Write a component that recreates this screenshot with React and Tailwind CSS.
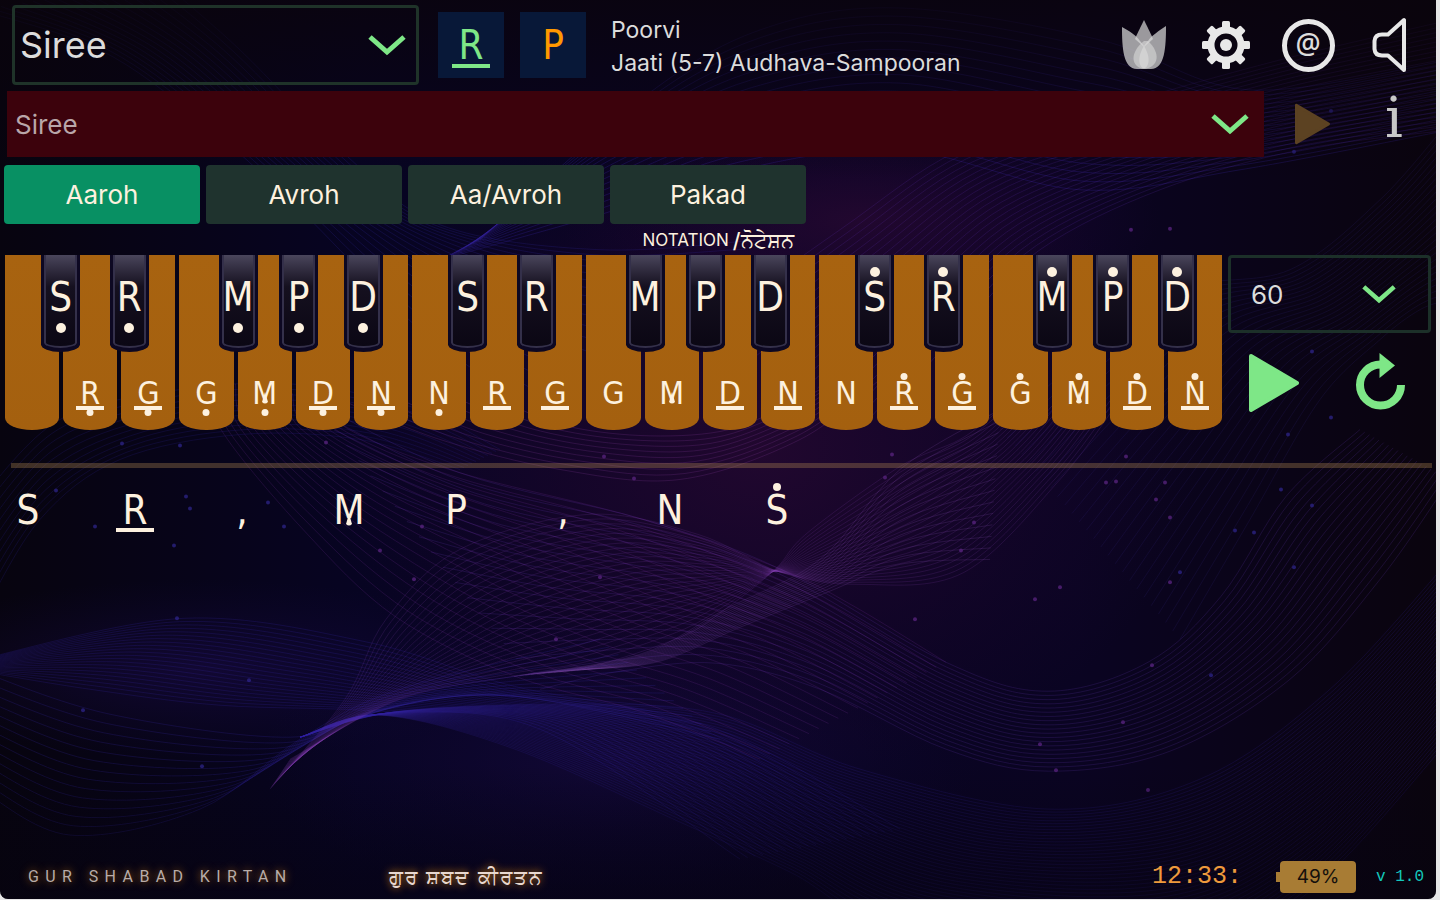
import { useState } from 'react';
import clsx from 'clsx';

const TABS = ['Aaroh', 'Avroh', 'Aa/Avroh', 'Pakad'];

// mark: komal = bar under the note, tivra = spike inside it
// octave: low = dot below, high = dot above
const OCTAVES = [
  {
    octave: 'low',
    white: [
      { note: '' },
      { note: 'R', mark: 'komal' },
      { note: 'G', mark: 'komal' },
      { note: 'G' },
      { note: 'M', mark: 'tivra' },
      { note: 'D', mark: 'komal' },
      { note: 'N', mark: 'komal' }
    ]
  },
  {
    octave: 'mid',
    white: [
      { note: 'N', octave: 'low' },
      { note: 'R', mark: 'komal' },
      { note: 'G', mark: 'komal' },
      { note: 'G' },
      { note: 'M', mark: 'tivra' },
      { note: 'D', mark: 'komal' },
      { note: 'N', mark: 'komal' }
    ]
  },
  {
    octave: 'high',
    white: [
      { note: 'N', octave: 'mid' },
      { note: 'R', mark: 'komal' },
      { note: 'G', mark: 'komal' },
      { note: 'G' },
      { note: 'M', mark: 'tivra' },
      { note: 'D', mark: 'komal' },
      { note: 'N', mark: 'komal' }
    ]
  }
];

const BLACK_KEYS = [
  { note: 'S', place: 'left-[9%]' },
  { note: 'R', place: 'left-[26%]' },
  { note: 'M', place: 'left-[53%]' },
  { note: 'P', place: 'left-[68%]' },
  { note: 'D', place: 'left-[84%]' }
];

const SEQUENCE = [
  { note: 'S' },
  { note: 'R', mark: 'komal' },
  { note: ',' },
  { note: 'M', mark: 'tivra' },
  { note: 'P' },
  { note: ',' },
  { note: 'N' },
  { note: 'S', octave: 'high' }
];

// Each ribbon is a set of smooth lines blended from one curve to another
const RIBBONS = [
  { from: [[-20, 660], [184, 619], [368, 643], [514, 687], [717, 730], [900, 830]], to: [[-20, 672], [90, 690], [220, 706], [380, 712], [540, 730], [740, 860]], n: 22, color: '#3a28b8', opacity: 0.2 },
  { from: [[-20, 672], [110, 715], [290, 738], [380, 710], [514, 697], [720, 740]], to: [[-20, 790], [70, 836], [200, 810], [300, 740], [400, 690], [600, 640]], n: 14, color: '#3425a0', opacity: 0.24 },
  { from: [[210, 380], [221, 430], [303, 530], [395, 617], [515, 677], [643, 713], [760, 760]], to: [[330, 400], [349, 430], [459, 473], [643, 520], [781, 570], [854, 607], [946, 663]], n: 20, color: '#8a35b0', opacity: 0.18 },
  { from: [[310, 400], [459, 473], [643, 520], [781, 570], [946, 663], [1048, 692], [1148, 663], [1221, 597], [1286, 497], [1360, 430]], to: [[540, 690], [620, 672], [717, 664], [820, 690], [946, 750], [1048, 772], [1170, 752], [1290, 680], [1380, 580], [1450, 480]], n: 20, color: '#6638b8', opacity: 0.2 },
  { from: [[300, 738], [400, 712], [580, 705], [720, 715], [860, 770], [1048, 810], [1200, 780], [1330, 690], [1450, 560]], to: [[300, 738], [380, 716], [515, 750], [680, 823], [790, 873], [900, 930], [1150, 960], [1300, 900], [1450, 740]], n: 44, color: '#3325a0', opacity: 0.2 },
  { from: [[270, 790], [345, 700], [386, 620], [460, 550], [588, 515], [698, 535], [781, 573], [860, 585], [964, 573], [1060, 480], [1120, 400]], to: [[290, 760], [400, 700], [514, 677], [588, 668], [680, 638], [725, 610], [775, 570], [808, 533], [900, 467], [960, 440], [1000, 410]], n: 26, color: '#8440b0', opacity: 0.18 },
  { from: [[480, 240], [640, 100], [760, 30], [900, 8], [1100, 40], [1250, 90], [1450, 60]], to: [[440, 260], [600, 215], [740, 170], [900, 150], [1080, 190], [1240, 170], [1450, 130]], n: 18, color: '#3c28b0', opacity: 0.26 },
  { from: [[700, 330], [840, 230], [960, 150], [1100, 110], [1280, 60], [1450, 20]], to: [[880, 420], [960, 330], [1040, 250], [1160, 190], [1300, 150], [1450, 130]], n: 24, color: '#5a2ca8', opacity: 0.22 },
  { from: [[1000, 430], [1080, 360], [1180, 290], [1290, 270], [1380, 200], [1450, 120]], to: [[1180, 640], [1250, 520], [1320, 400], [1380, 340], [1420, 310], [1450, 300]], n: 26, color: '#3c2c94', opacity: 0.16 },
  { from: [[-20, 10], [100, 50], [200, 120], [300, 210], [420, 330], [520, 400]], to: [[160, -20], [240, 50], [340, 150], [440, 225], [600, 250], [760, 240]], n: 18, color: '#2c2490', opacity: 0.26 },
  { from: [[340, 400], [440, 440], [560, 470], [680, 480], [800, 440], [880, 380]], to: [[500, 400], [560, 425], [640, 436], [720, 432], [780, 410], [820, 390]], n: 9, color: '#8a3aa0', opacity: 0.22 },
  { from: [[-20, 620], [40, 520], [120, 460], [240, 435], [360, 440], [460, 470]], to: [[-20, 500], [60, 420], [180, 390], [300, 385], [420, 410], [500, 450]], n: 11, color: '#30249c', opacity: 0.2 },
  { from: [[514, 677], [640, 655], [725, 610], [820, 560], [900, 470], [1000, 410]], to: [[588, 670], [660, 662], [740, 628], [827, 593], [900, 565], [990, 560]], n: 14, color: '#8a50b8', opacity: 0.2 }
];

const SPARKS = [
  [122, 444], [180, 446], [326, 443], [56, 491], [186, 497], [190, 509], [268, 503], [95, 527], [284, 527],
  [174, 546], [422, 527], [380, 551], [604, 457], [634, 479], [414, 580], [556, 640], [600, 578], [885, 478],
  [892, 455], [974, 523], [961, 551], [1035, 600], [1106, 483], [1116, 482], [1126, 457], [1156, 500],
  [1165, 483], [1170, 518], [1235, 531], [1254, 533], [1281, 490], [1312, 506], [1180, 573], [1170, 583],
  [1294, 568], [1152, 666], [1211, 676], [1123, 723], [1056, 771], [1040, 745], [1148, 791], [177, 619],
  [202, 767], [249, 681], [83, 711], [1331, 111], [1207, 97], [1294, 152], [1131, 230], [1170, 229], [1312, 352],
  [1331, 418], [1288, 435], [915, 620], [1060, 588]
];

const blend = (a, b, t) => a + (b - a) * t;

const ribbonLine = (ribbon, i) => {
  const t = i / (ribbon.n - 1);
  const last = ribbon.from.length - 1;
  const end = ribbon.to.length - 1;
  const pts = ribbon.from.map(([x, y], k) => {
    const other = ribbon.to[Math.round((k / last) * end)];
    return [blend(x, other[0], t), blend(y, other[1], t)];
  });
  let d = `M${pts[0].join(' ')}`;
  for (let k = 0; k < last; k++) {
    const p0 = pts[k - 1] || pts[k];
    const p1 = pts[k];
    const p2 = pts[k + 1];
    const p3 = pts[k + 2] || p2;
    d += ` C${p1[0] + (p2[0] - p0[0]) / 6} ${p1[1] + (p2[1] - p0[1]) / 6}`;
    d += ` ${p2[0] - (p3[0] - p1[0]) / 6} ${p2[1] - (p3[1] - p1[1]) / 6} ${p2[0]} ${p2[1]}`;
  }
  return d;
};

const Backdrop = () => (
  <svg className="absolute inset-0 -z-10 size-full" viewBox="0 0 1436 900" preserveAspectRatio="none" aria-hidden="true">
    <defs>
      <linearGradient id="base" x1="0" x2="1">
        <stop offset="0" stopColor="#07040f" />
        <stop offset="0.25" stopColor="#070422" />
        <stop offset="0.75" stopColor="#0a0422" />
        <stop offset="1" stopColor="#0a040e" />
      </linearGradient>
      <radialGradient id="plum">
        <stop offset="0" stopColor="#240830" stopOpacity="0.9" />
        <stop offset="1" stopColor="#1c0530" stopOpacity="0" />
      </radialGradient>
      <radialGradient id="indigo">
        <stop offset="0" stopColor="#190b44" stopOpacity="0.6" />
        <stop offset="1" stopColor="#120838" stopOpacity="0" />
      </radialGradient>
      <linearGradient id="shade" x1="0" x2="0" y1="0" y2="1">
        <stop offset="0" stopColor="#0a040c" stopOpacity="0.8" />
        <stop offset="0.2" stopColor="#0a040c" stopOpacity="0" />
        <stop offset="0.85" stopColor="#06030f" stopOpacity="0" />
        <stop offset="1" stopColor="#06030f" stopOpacity="0.5" />
      </linearGradient>
    </defs>
    <rect width="1436" height="900" fill="url(#base)" />
    <ellipse cx="760" cy="450" rx="440" ry="330" fill="url(#plum)" />
    <ellipse cx="860" cy="220" rx="300" ry="110" fill="url(#plum)" />
    <ellipse cx="200" cy="670" rx="330" ry="90" fill="url(#indigo)" />
    <ellipse cx="620" cy="760" rx="360" ry="150" fill="url(#indigo)" />
    {RIBBONS.map((ribbon, r) => (
      <g key={r} fill="none" stroke={ribbon.color} strokeOpacity={ribbon.opacity}>
        {Array.from({ length: ribbon.n }, (_, i) => (
          <path key={i} d={ribbonLine(ribbon, i)} />
        ))}
      </g>
    ))}
    {SPARKS.map(([x, y], i) => (
      <circle key={i} cx={x} cy={y} r="2" fill={x > 320 && x < 1180 ? '#5a2480' : '#2e2488'} opacity="0.75" />
    ))}
    <rect width="1436" height="900" fill="url(#shade)" />
  </svg>
);

const Chevron = ({ className }) => (
  <svg className={clsx('pointer-events-none absolute top-1/2 -translate-y-1/2', className)} viewBox="0 0 38 22" fill="none" stroke="#7ee787" strokeWidth="5" aria-hidden="true">
    <path d="M2 3 L19 18 L36 3" />
  </svg>
);

const PlayIcon = ({ className }) => (
  <svg className={className} viewBox="0 0 52 60" fill="currentColor" stroke="currentColor" strokeWidth="4" strokeLinejoin="round" aria-hidden="true">
    <path d="M3 3 L49 30 L3 57 Z" />
  </svg>
);

const LotusIcon = () => (
  <svg className="h-[52px] w-[46px]" viewBox="0 0 46 52" fill="#d8d8d8" aria-hidden="true">
    <path opacity="0.72" d="M1 8 C8 12 15 16 19 22 C30 34 30 48 22 50 L16 50 C2 50 1 28 1 8 Z" />
    <path opacity="0.72" d="M45 7 C38 12 31 16 27 22 C16 34 16 48 24 50 L30 50 C44 50 45 28 45 7 Z" />
    <path opacity="0.7" d="M23 1 C19 9 16 15 14 20 L23 28 L32 20 C30 15 27 9 23 1 Z" />
    <path opacity="0.6" d="M23 22 C8 34 10 48 23 50 C38 48 40 34 27 22 Z" />
  </svg>
);

const GearIcon = () => (
  <svg className="size-[50px]" viewBox="-25 -25 50 50" fill="#e8e8e8" aria-hidden="true">
    <circle r="15" fill="none" stroke="#e8e8e8" strokeWidth="7" />
    {[0, 45, 90, 135, 180, 225, 270, 315].map((angle) => (
      <rect key={angle} x="-4" y="-24" width="8" height="9" rx="1.5" transform={`rotate(${angle})`} />
    ))}
    <circle r="6" />
  </svg>
);

const SpeakerIcon = () => (
  <svg className="h-[56px] w-[36px]" viewBox="0 0 36 56" fill="none" stroke="#e8e8e8" strokeWidth="4" strokeLinejoin="round" aria-hidden="true">
    <path d="M32 3 V53 L16 38.5 H10 Q3 38.5 2.5 32 V24 Q3 17.5 10 17.5 H16 Z" />
  </svg>
);

const ReloadIcon = () => (
  <svg className="h-[60px] w-[52px]" viewBox="0 0 52 60" aria-hidden="true">
    <path d="M46 32 A20.5 20.5 0 1 1 25.5 11.5" fill="none" stroke="#7ee787" strokeWidth="8" />
    <path d="M24.5 0 L40 12.5 L24.5 25 Z" fill="#7ee787" />
  </svg>
);

const SIZES = {
  small: { box: 'h-[27px] w-7 text-[32px]', dot: 'size-[7px]', above: '-top-1.5', below: '-bottom-2.5', bar: 'h-1 w-7 -bottom-1' },
  large: { box: 'h-10 w-7 text-[40px]', dot: 'size-2.5', above: '-top-2.5', below: '-bottom-4', bar: 'h-1 w-10 bottom-0' },
  line: { box: 'h-[37px] w-[38px] text-[40px]', dot: 'size-2', above: '-top-2', below: '-bottom-3', bar: 'h-1 w-[38px] -bottom-1' }
};

const Note = ({ note, mark, octave, size }) => {
  const s = SIZES[size];
  return (
    <span className={clsx("relative flex items-center justify-center font-['Liberation_Sans_Narrow','DejaVu_Sans_Condensed',sans-serif] leading-none", s.box)}>
      {note}
      {mark === 'tivra' && (
        <svg className="absolute bottom-0.5 left-1/2 h-3 w-1.5 -translate-x-1/2" viewBox="0 0 6 12" fill="currentColor" aria-hidden="true">
          <path d="M3 0 L6 10 Q3 13 0 10 Z" />
        </svg>
      )}
      {mark === 'komal' && <span className={clsx('absolute left-1/2 -translate-x-1/2 bg-current', s.bar)} />}
      {octave === 'low' && <span className={clsx('absolute left-1/2 -translate-x-1/2 rounded-full bg-current', s.dot, s.below)} />}
      {octave === 'high' && <span className={clsx('absolute left-1/2 -translate-x-1/2 rounded-full bg-current', s.dot, s.above)} />}
    </span>
  );
};

const WhiteKey = ({ note, mark, octave }) => (
  <button
    type="button"
    aria-label={note ? `${octave} ${note}` : 'Lowest key'}
    className="flex flex-1 items-end justify-center rounded-[0_0_50%_50%/0_0_7%_7%] bg-linear-to-b from-[#a86310] to-[#a4600f] pb-[24px]"
  >
    {note && <Note note={note} mark={mark} octave={octave} size="small" />}
  </button>
);

const BlackKey = ({ note, octave, place }) => (
  <button
    type="button"
    aria-label={`${octave} ${note}`}
    className={clsx('absolute top-0 h-[97px] w-[39px] rounded-[0_0_50%_50%/0_0_8%_8%] bg-[#0d0822] px-[3px] pb-1', place)}
  >
    <span className="flex h-full justify-center rounded-[0_0_50%_50%/0_0_6%_6%] border-x-2 border-b-2 border-[#34304a] bg-linear-to-b from-[#4a465c] via-[#15101f] via-35% to-[#0b0714] pt-[22px]">
      <Note note={note} octave={octave} size="large" />
    </span>
  </button>
);

const Keyboard = () => (
  <div className="flex h-[175px] min-w-0 flex-1 gap-1">
    {OCTAVES.map(({ octave, white }) => (
      <div key={octave} className="relative flex flex-1 gap-1">
        {white.map((key, i) => (
          <WhiteKey key={i} note={key.note} mark={key.mark} octave={key.octave || octave} />
        ))}
        {BLACK_KEYS.map((key) => (
          <BlackKey key={key.note} {...key} octave={octave} />
        ))}
      </div>
    ))}
  </div>
);

const App = () => {
  const [raag, setRaag] = useState('Siree');
  const [variant, setVariant] = useState('Siree');
  const [tempo, setTempo] = useState('60');
  const [tab, setTab] = useState('Aaroh');

  return (
    <div className="min-h-screen bg-[#e6e6e6] pr-1 pb-px font-[Inter,'Noto_Sans',sans-serif]">
      <div className="relative isolate flex min-h-[calc(100vh-1px)] flex-col overflow-hidden rounded-b-lg text-[#fdf1df]">
        <Backdrop />

        <header className="flex items-center pt-[5px] pr-[5px] pl-3 text-[#dcdcdc]">
          <div className="relative h-20 w-[407px] rounded-sm border-[3px] border-[#1f3329]">
            <select
              aria-label="Raag"
              value={raag}
              onChange={(e) => setRaag(e.target.value)}
              className="size-full appearance-none bg-transparent pl-[5px] text-4xl"
            >
              <option>Siree</option>
            </select>
            <Chevron className="right-2.5 h-[22px] w-[38px]" />
          </div>
          <div className="ml-[19px] flex gap-4">
            <div className="flex size-[66px] items-center justify-center bg-[#081838] text-[#7ee787]">
              <Note note="R" mark="komal" size="line" />
            </div>
            <div className="flex size-[66px] items-center justify-center bg-[#081838] text-[#ff9800]">
              <Note note="P" size="line" />
            </div>
          </div>
          <div className="ml-[25px] pt-1 text-[23px] leading-[33px]">
            <p>Poorvi</p>
            <p>Jaati (5-7) Audhava-Sampooran</p>
          </div>
          <nav className="ml-auto flex">
            <button type="button" aria-label="Lotus" className="flex w-[82px] items-center justify-center">
              <LotusIcon />
            </button>
            <button type="button" aria-label="Settings" className="flex w-[82px] items-center justify-center">
              <GearIcon />
            </button>
            <button type="button" aria-label="Contact" className="flex w-[82px] items-center justify-center">
              <span className="flex size-[53px] items-center justify-center rounded-full border-[5px] border-[#e8e8e8] pb-1 font-['Noto_Sans',sans-serif] text-[28px] leading-none font-medium">
                @
              </span>
            </button>
            <button type="button" aria-label="Sound" className="flex w-[82px] items-center justify-center">
              <SpeakerIcon />
            </button>
          </nav>
        </header>

        <div className="mt-1.5 flex h-[66px] pl-[7px]">
          <div className="relative flex-1 bg-[#3c020c]">
            <select
              aria-label="Variant"
              value={variant}
              onChange={(e) => setVariant(e.target.value)}
              className="size-full appearance-none bg-transparent pl-2 text-[26px] text-[#b9a6a9]"
            >
              <option>Siree</option>
            </select>
            <Chevron className="right-[15px] h-[22px] w-[38px]" />
          </div>
          <button type="button" aria-label="Play raag" className="ml-2 flex w-[80px] items-center justify-center text-[#5c4222]">
            <PlayIcon className="h-[42px] w-[37px]" />
          </button>
          <button type="button" aria-label="Information" className="flex w-[84px] items-center justify-center pb-3 font-['DejaVu_Serif',serif] text-[56px] leading-none text-[#c8c8c8]">
            i
          </button>
        </div>

        <div role="tablist" className="mt-2 flex gap-1.5 pl-1">
          {TABS.map((name) => (
            <button
              key={name}
              type="button"
              role="tab"
              aria-selected={tab === name}
              onClick={() => setTab(name)}
              className={clsx('h-[59px] w-[196px] rounded-sm text-[26px]', tab === name ? 'bg-[#089063]' : 'bg-[#1f332e]')}
            >
              {name}
            </button>
          ))}
        </div>

        <p className="flex h-[31px] items-center justify-center gap-1 pt-0.5 text-[17px]">
          NOTATION <span className="text-[21px] font-medium">/ਨੋਟੇਸ਼ਨ</span>
        </p>

        <main className="flex flex-1 flex-col">
          <div className="flex gap-1.5 pr-[5px] pl-[5px]">
            <Keyboard />
            <div className="w-[203px]">
              <div className="relative h-[78px] rounded-sm border-[3px] border-[#1c3029]">
                <select
                  aria-label="Tempo"
                  value={tempo}
                  onChange={(e) => setTempo(e.target.value)}
                  className="size-full appearance-none bg-transparent pl-5 text-[26px] text-[#dcdcdc]"
                >
                  <option>60</option>
                </select>
                <Chevron className="right-8 h-5 w-[34px]" />
              </div>
              <div className="mt-5 flex justify-between pr-6 pl-5 text-[#7ee787]">
                <button type="button" aria-label="Play notes">
                  <PlayIcon className="h-[60px] w-[52px]" />
                </button>
                <button type="button" aria-label="Restart">
                  <ReloadIcon />
                </button>
              </div>
            </div>
          </div>
          <hr className="mt-[33px] mr-1 ml-[11px] h-[5px] border-0 bg-[#b08850]/35" />
          <div className="mt-[23px] flex gap-[69px] pl-[9px]">
            {SEQUENCE.map((item, i) => (
              <Note key={i} {...item} size="line" />
            ))}
          </div>
        </main>

        <footer className="flex h-11 items-center pr-3 pl-7">
          <span className="font-[Roboto,sans-serif] text-base tracking-[0.4em] text-[#b8aca8] [text-shadow:0_0_8px_#b06a10]">GUR SHABAD KIRTAN</span>
          <span className="ml-24 text-xl tracking-[2px] text-[#e8d8d0] [text-shadow:0_0_8px_#e08a10]">ਗੁਰ ਸ਼ਬਦ ਕੀਰਤਨ</span>
          <time className="ml-auto font-['Liberation_Mono',monospace] text-[25px] text-[#ee9a3c]">12:33:</time>
          <div className="ml-[34px] flex items-center">
            <span className="h-2.5 w-1 bg-[#a87c34]" />
            <span className="flex h-8 w-[76px] items-center justify-center rounded-sm bg-[#a87c34] text-[19px] text-[#14100c]">49%</span>
          </div>
          <span className="ml-5 font-['Liberation_Mono',monospace] text-base text-[#14c8bc]">v 1.0</span>
        </footer>
      </div>
    </div>
  );
};

export default App;
